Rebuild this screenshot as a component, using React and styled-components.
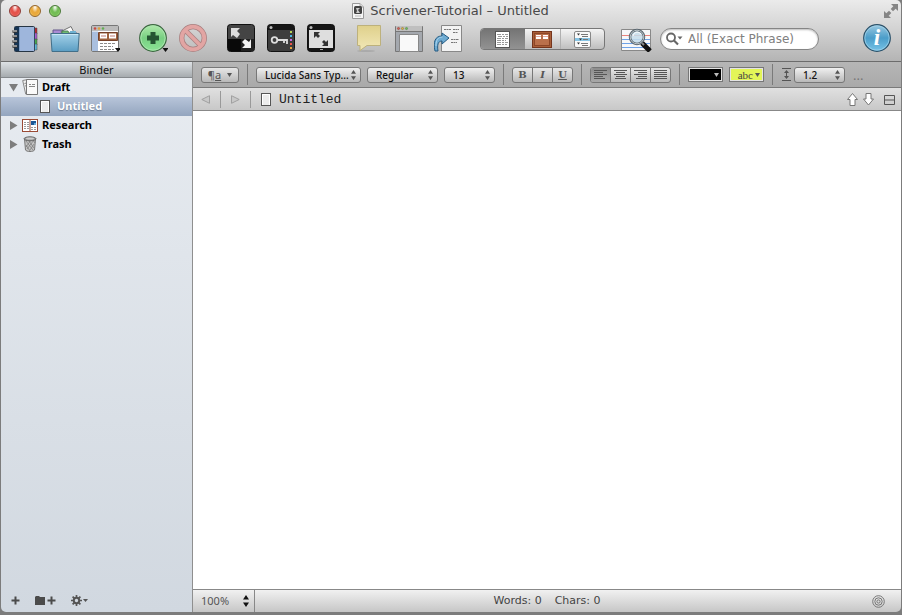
import React from 'react'
import styled, {createGlobalStyle} from "styled-components"

const GlobalStyle = createGlobalStyle`
    * {
        box-sizing: border-box;
    }
    body {
        margin: 0;
        background: #7c7c7c;
        font-family: "Noto Sans", "Open Sans", sans-serif;
        color: #333;
    }
    button, select, input, textarea {
        font: inherit;
        color: inherit;
        margin: 0;
        padding: 0;
        border: none;
        background: none;
        outline: none;
    }
    svg {
        display: block;
        flex: none;
    }
`

const Window = styled.div`
    min-height: 100vh;
    display: flex;
    flex-direction: column;
    border: solid #7c7c7c;
    border-width: 0 1px 3px;
`

const Header = styled.header`
    height: 62px;
    padding: 0 9px 0 8px;
    background: linear-gradient(#ebebeb, #d4d4d4 45%, #b4b4b4);
    border-bottom: 1px solid #6c6c6c;
    border-radius: 5px 5px 0 0;
`

const TitleBar = styled.div`
    height: 22px;
    display: grid;
    grid-template-columns: 1fr auto 1fr;
    align-items: center;
`

const Lights = styled.div`
    display: flex;
    gap: 8px;
`

const Light = styled.button`
    width: 12px;
    height: 12px;
    border-radius: 50%;
    border: 1px solid ${props => props.$edge};
    background: radial-gradient(ellipse at 50% 12%, #fff 0, ${props => props.$color} 42%, ${props => props.$color} 60%, ${props => props.$glow} 100%);
`

const Title = styled.h1`
    display: flex;
    align-items: center;
    gap: 6px;
    margin: 0;
    font-family: "DejaVu Sans", sans-serif;
    font-size: 13px;
    line-height: 22px;
    font-weight: 400;
    color: #484848;
`

const ExpandButton = styled.button`
    justify-self: end;
    margin-right: -6px;
`

const ToolBar = styled.div`
    height: 34px;
    display: flex;
    align-items: center;
    padding-left: 1px;
`

const ToolGroup = styled.div`
    display: flex;
    gap: 10px;
    margin-right: ${props => props.$gap || 18}px;
`

const ToolButton = styled.button`
    width: 30px;
    height: 30px;
`

const Segments = styled.div`
    display: flex;
    width: 125px;
    height: 22px;
    margin-right: 16px;
    border: 1px solid #777;
    border-radius: 4px;
    overflow: hidden;
    background: linear-gradient(#f4f4f4, #bebebe);
`

const Segment = styled.button`
    flex: ${props => props.$grow} 1 0;
    display: flex;
    align-items: center;
    justify-content: center;
    background: ${props => props.$on ? "linear-gradient(#747474, #929292)" : "none"};
    & + & + & {
        border-left: 1px solid #b0b0b0;
    }
`

const SearchField = styled.label`
    display: flex;
    align-items: center;
    gap: 5px;
    width: 159px;
    height: 22px;
    margin: 0 auto 0 8px;
    padding: 0 6px 0 5px;
    border: 1px solid #858585;
    border-radius: 11px;
    background: #fff;
    box-shadow: inset 0 1px 2px #bbb;
    input {
        min-width: 0;
        flex: 1;
        font-family: "DejaVu Sans", sans-serif;
        font-size: 12px;
        line-height: 18px;
    }
    input::placeholder {
        color: #808080;
        opacity: 1;
    }
`

const Body = styled.div`
    flex: 1;
    display: flex;
`

const Sidebar = styled.aside`
    width: 192px;
    display: flex;
    flex-direction: column;
    border-right: 1px solid #8f8f8f;
    background: linear-gradient(#e8ecf1, #d1d8e0);
    border-radius: 0 0 0 5px;
`

const SidebarTitle = styled.h2`
    height: 16px;
    margin: 0;
    border-bottom: 1px solid #85898d;
    background: linear-gradient(#dde1e4, #a6abaf);
    font-size: 11px;
    line-height: 16px;
    font-weight: 400;
    text-align: center;
    color: #111;
`

const Tree = styled.ul`
    flex: 1;
    margin: 0;
    padding: 0;
    list-style: none;
`

const TreeRow = styled.button`
    width: 100%;
    height: 19px;
    display: flex;
    align-items: center;
    gap: ${props => props.$level ? 7 : 4}px;
    padding: 0 0 1px ${props => props.$level ? 39 : 8}px;
    font-size: 11px;
    line-height: 18px;
    font-weight: 700;
    color: ${props => props.$selected ? "#fff" : "#000"};
    background: ${props => props.$selected ? "linear-gradient(#b8c5da, #93a5be)" : "none"};
    text-shadow: ${props => props.$selected ? "0 1px 1px #66778f" : "none"};
`

const SidebarTools = styled.div`
    height: 23px;
    display: flex;
    align-items: center;
    gap: 15px;
    padding: 0 10px;
`

const Main = styled.main`
    flex: 1;
    min-width: 0;
    display: flex;
    flex-direction: column;
`

const FormatBar = styled.div`
    height: 26px;
    display: flex;
    align-items: center;
    gap: 8px;
    padding: 0 8px;
    border-bottom: 1px solid #7a7a7a;
    background: linear-gradient(#b6b6b6, #a9a9a9);
    overflow: hidden;
`

const FormatGroup = styled.div`
    display: flex;
    align-items: center;
    gap: ${props => props.$gap || 6}px;
`

const Divider = styled.span`
    width: 1px;
    height: ${props => props.$height || 21}px;
    background: ${props => props.$color || "#7a7a7a"};
`

const SmallButton = styled.button`
    width: ${props => props.$width}px;
    height: 16px;
    display: flex;
    align-items: center;
    justify-content: center;
    gap: 6px;
    border: 1px solid #777;
    border-radius: 3px;
    background: linear-gradient(#e6e6e6, #b9b9b9);
    font-size: 11px;
    line-height: 14px;
    color: #555;
`

const Popup = styled.label`
    width: ${props => props.$width}px;
    height: 16px;
    display: flex;
    align-items: center;
    padding: 0 4px 0 8px;
    border: 1px solid #777;
    border-radius: 3px;
    background: linear-gradient(#f0f0f0, #b9b9b9);
    select {
        flex: 1;
        min-width: 0;
        appearance: none;
        font-size: 10px;
        line-height: 14px;
        font-weight: 500;
        color: #111;
    }
`

const ButtonStrip = styled.div`
    display: flex;
    height: 16px;
    border: 1px solid #777;
    border-radius: 3px;
    overflow: hidden;
    background: linear-gradient(#e8e8e8, #b9b9b9);
`

const StripButton = styled.button`
    width: ${props => props.$last ? 19 : 20}px;
    display: flex;
    align-items: center;
    justify-content: center;
    border-right: ${props => props.$last ? "none" : "1px solid #777"};
    background: ${props => props.$on ? "linear-gradient(#8d8d8d, #a8a8a8)" : "none"};
    font-family: "DejaVu Serif", serif;
    font-size: 10px;
    line-height: 14px;
    font-weight: 700;
    color: #555;
`

const Swatch = styled.button`
    width: 35px;
    height: 15px;
    display: flex;
    align-items: center;
    justify-content: flex-end;
    gap: 2px;
    padding: 0 3px;
    border: 1px solid #777;
    box-shadow: inset 0 0 0 1px #e4e4e4;
    background: ${props => props.$color};
    font-family: "Liberation Serif", serif;
    font-size: 11px;
    line-height: 12px;
    color: #444;
`

const Dots = styled.button`
    height: 16px;
    font-size: 13px;
    line-height: 16px;
    color: #777;
`

const DocumentBar = styled.div`
    height: 23px;
    display: flex;
    align-items: center;
    gap: 8px;
    padding: 0 6px 0 8px;
    border-bottom: 1px solid #888;
    background: linear-gradient(#e0e0e0, #c8c8c8);
`

const DocumentTitle = styled.h2`
    flex: 1;
    margin: 0;
    padding-top: 1px;
    font-family: "Liberation Mono", monospace;
    font-size: 13px;
    line-height: 21px;
    font-weight: 400;
    color: #222;
`

const DocumentTools = styled.div`
    display: flex;
    align-items: center;
    gap: 5px;
`

const SplitButton = styled.button`
    padding-left: 5px;
`

const Editor = styled.textarea`
    flex: 1;
    width: 100%;
    padding: 8px;
    background: #fff;
    resize: none;
    display: block;
    font-size: 13px;
`

const StatusBar = styled.footer`
    height: 23px;
    display: grid;
    grid-template-columns: 1fr auto 1fr;
    align-items: center;
    border-top: 1px solid #888;
    border-radius: 0 0 5px 0;
    background: linear-gradient(#f1f1f1, #c6c6c6);
    color: #444;
`

const Zoom = styled.label`
    width: 62px;
    height: 22px;
    display: flex;
    align-items: center;
    padding: 0 5px 0 8px;
    border-right: 1px solid #888;
    select {
        flex: 1;
        min-width: 0;
        appearance: none;
        font-size: 11px;
        line-height: 16px;
        color: #555;
    }
`

const Counts = styled.div`
    display: flex;
    gap: 13px;
    font-family: "DejaVu Sans", sans-serif;
    font-size: 11px;
    line-height: 16px;
`

const TargetButton = styled.button`
    justify-self: end;
    margin-right: 16px;
`

const Caret = ({fill = "#555"}) => (
    <svg width="5" height="4" viewBox="0 0 5 4"><path d="M0 0h5L2.5 4z" fill={fill} /></svg>
)

const UpDown = ({big}) => (
    <svg width={big ? 6 : 5} height={big ? 12 : 10} viewBox="0 0 5 10">
        <path d="M0 3.7L2.5 0 5 3.7zM0 6.3h5L2.5 10z" fill={big ? "#111" : "#555"} />
    </svg>
)

const DocIcon = () => (
    <svg width="10" height="13" viewBox="0 0 10 13">
        <rect x=".5" y=".5" width="9" height="12" fill="#ececec" stroke="#555" />
        <path d="M1.5 12V1.5h7V12" fill="none" stroke="#fff" />
    </svg>
)

const AppIcon = () => (
    <svg width="12" height="16" viewBox="0 0 12 16">
        <path d="M.5.5H8L11.500 4v11.500H.5z" fill="#f5f5f5" stroke="#999" />
        <path d="M8 .5V4h3.500" fill="#ddd" stroke="#aaa" />
        <rect x="2" y="3" width="8" height="8" rx="1.500" fill="#444" />
        <path d="M4 5h4L6 7l2 3H4l1-2z" fill="#ccc" />
        <path d="M3 13h6" stroke="#bbb" />
    </svg>
)

const ExpandIcon = () => (
    <svg width="14" height="14" viewBox="0 0 14 14">
        <path d="M7 0h7v7l-2.300-2.300-2.700 2.600L6.700 5l2.600-2.700zM0 7l2.300 2.300L5 6.700 7.300 9l-2.600 2.700L7 14H0z" fill="#858585" />
    </svg>
)

const NotebookIcon = () => (
    <svg width="30" height="30" viewBox="0 0 30 30">
        <path d="M23 4h4v6h-4z" fill="#b62a31" stroke="#444" strokeWidth=".5" />
        <path d="M23 9h4v7h-4z" fill="#a75bd0" stroke="#444" strokeWidth=".5" />
        <path d="M23 15h4v6h-4z" fill="#47a94d" stroke="#444" strokeWidth=".5" />
        <path d="M23 20h4v6h-4z" fill="#5db5d8" stroke="#444" strokeWidth=".5" />
        <rect x="4.500" y="2.500" width="20" height="25" rx="1" fill="#9eb6dc" stroke="#263544" />
        <path d="M5 3h4v24H5z" fill="#153454" />
        <path d="M9.500 3v24" stroke="#7e9cc4" />
        <path d="M24.500 3v24" stroke="#33465f" />
        <path d="M2.500 7.500h5m-5 5h5m-5 5h5m-5 5h5" stroke="#333" strokeWidth="2.500" />
        <path d="M3 7h4m-4 5h4m-4 5h4m-4 5h4" stroke="#eee" />
    </svg>
)

const FoldersIcon = () => (
    <svg width="30" height="30" viewBox="0 0 30 30">
        <defs><linearGradient id="folder" x2="0" y2="1"><stop stopColor="#a5d2e9" /><stop offset="1" stopColor="#5a9dc3" /></linearGradient></defs>
        <path d="M3 9V6h10l1 3h13v5H3z" fill="#a98bd4" stroke="#65598b" />
        <path d="M11 7.500l10-5 4 8H12z" fill="#f9f9f9" stroke="#555" strokeWidth=".8" />
        <path d="M12 10V7h6l1 2h7v3H12z" fill="#71bb76" stroke="#44734b" strokeWidth=".8" />
        <path d="M20 10V7h6v4h-6z" fill="#6fb2d2" />
        <path d="M.8 9.500h28.400L28 27.500H2z" fill="url(#folder)" stroke="#426f89" />
        <path d="M2 10.500h26" stroke="#c9e7f5" />
    </svg>
)

const LayoutIcon = () => (
    <svg width="30" height="30" viewBox="0 0 30 30">
        <rect x="1.500" y="1.500" width="27" height="26" rx="1.500" fill="#fff" stroke="#777" />
        <path d="M2 2h26v5H2z" fill="#bbb" />
        <circle cx="5" cy="4.500" r="1.300" fill="#c84a43" /><circle cx="9" cy="4.500" r="1.300" fill="#dca13e" /><circle cx="13" cy="4.500" r="1.300" fill="#62ae53" />
        <path d="M2 7.500h6V27H2z" fill="#a9bfdf" />
        <path d="M8.500 8.500h19v8h-19z" fill="#9e613e" stroke="#754129" />
        <path d="M10 9.500h7v5h-7zm9 0h7v5h-7z" fill="#fff" />
        <path d="M11 12h5m4 0h5" stroke="#c27d75" />
        <path d="M10 19.500h16m-16 3h13m-13 3h14" stroke="#8b8b8b" strokeDasharray="3 1" />
        <path d="M25 24h6l-3 4z" fill="#111" />
    </svg>
)

const AddIcon = () => (
    <svg width="30" height="30" viewBox="0 0 30 30">
        <defs><linearGradient id="add" x2="0" y2="1"><stop stopColor="#b2eaac" /><stop offset=".5" stopColor="#78cf82" /><stop offset="1" stopColor="#8be495" /></linearGradient></defs>
        <circle cx="15" cy="14" r="13.300" fill="url(#add)" stroke="#3c6640" strokeWidth="1.200" />
        <circle cx="15" cy="14" r="12.200" fill="none" stroke="#a9e5ad" />
        <path d="M12.500 8h5v3.500H21v5h-3.500V20h-5v-3.500H9v-5h3.500z" fill="#255532" />
        <path d="M24.500 24h6l-3 4z" fill="#111" />
    </svg>
)

const ForbidIcon = () => (
    <svg width="30" height="30" viewBox="0 0 30 30">
        <g fill="none" stroke="#a98080">
            <circle cx="15" cy="14" r="11.300" strokeWidth="5.300" />
            <path d="M7 6l16 16" strokeWidth="5" />
            <circle cx="15" cy="14" r="11.300" stroke="#e2a5a3" strokeWidth="3.800" />
            <path d="M7 6l16 16" stroke="#e2a5a3" strokeWidth="3.500" />
        </g>
    </svg>
)

const ComposeIcon = () => (
    <svg width="30" height="30" viewBox="0 0 30 30">
        <rect x="1.500" y=".5" width="27" height="27" rx="3" fill="#444" stroke="#111" />
        <path d="M2 15h13v12H4c-1 0-2-1-2-2z" fill="#090909" />
        <path d="M15 15h13v10c0 1-1 2-2 2H15z" fill="#202020" />
        <path d="M5 4h9l-3 3 3 3-3 4-4-3-2 2z" fill="#ddd" />
        <path d="M25 24h-9l3-3-3-3 3-3 4 3 2-3z" fill="#f2f2f2" />
    </svg>
)

const KeywordsIcon = () => (
    <svg width="30" height="30" viewBox="0 0 30 30">
        <rect x="1.500" y=".5" width="27" height="27" rx="3" fill="#3d3d3d" stroke="#111" />
        <path d="M2 3a2 2 0 012-2h22a2 2 0 012 2v3H2z" fill="#161616" />
        <circle cx="5" cy="3.500" r="1.500" fill="#bbb" />
        <circle cx="8.500" cy="16" r="2.800" fill="none" stroke="#ddd" strokeWidth="1.800" />
        <path d="M11 16h10v4m-3-4v3" fill="none" stroke="#ddd" strokeWidth="1.800" />
        <path d="M24 7h2v2h-2z" fill="#b6d455" />
        <path d="M24 11h2v2h-2z" fill="#48b9e2" />
        <path d="M24 15h2v2h-2z" fill="#c96de1" />
        <path d="M24 19h2v2h-2z" fill="#ed554b" />
        <path d="M24 23h2v2h-2z" fill="#e9a33d" />
    </svg>
)

const FullScreenIcon = () => (
    <svg width="30" height="30" viewBox="0 0 30 30">
        <rect x="1.500" y=".5" width="27" height="27" rx="3" fill="#161616" stroke="#111" />
        <circle cx="5" cy="3.500" r="1.500" fill="#bbb" />
        <path d="M3 6h24v18H3z" fill="#dedede" />
        <path d="M8 8h6l-2 2 2 2-2 2-2-2-2 2zM22 22h-6l2-2-2-2 2-2 2 2 2-2z" fill="#333" />
        <path d="M14 25.500h3" stroke="#aaa" />
    </svg>
)

const NoteIcon = () => (
    <svg width="30" height="30" viewBox="0 0 30 30">
        <defs><linearGradient id="note" x2="0" y2="1"><stop stopColor="#dfd08b" /><stop offset="1" stopColor="#f2e8b8" /></linearGradient></defs>
        <ellipse cx="12" cy="27" rx="9" ry="1" fill="#aaa" />
        <path d="M3.500 1.500h23v20H13l-7 5v-5H3.500z" fill="url(#note)" stroke="#bdb17c" />
    </svg>
)

const PanelIcon = () => (
    <svg width="30" height="30" viewBox="0 0 30 30">
        <path d="M1.500 27.500v-25h27v25z" fill="#a4a8ae" stroke="#777" />
        <path d="M2 2h26v5H2z" fill="#bfbfbf" />
        <path d="M2 7.500h26" stroke="#777" />
        <circle cx="4.500" cy="4.500" r="1.100" fill="#d65d54" stroke="#914138" strokeWidth=".6" /><circle cx="8.500" cy="4.500" r="1.100" fill="#e1b142" stroke="#917838" strokeWidth=".6" /><circle cx="12.500" cy="4.500" r="1.100" fill="#69bf59" stroke="#508547" strokeWidth=".6" />
        <path d="M5.500 10.500h19v17h-19z" fill="#f9f9f9" stroke="#888" />
    </svg>
)

const ReferenceIcon = () => (
    <svg width="30" height="30" viewBox="0 0 30 30">
        <path d="M7.500 1.500h20v26h-20z" fill="#f3f3f3" stroke="#888" />
        <path d="M10 5.500h7m2 0h6m-6 3h5m-14 5h3m4 2h8m-8 3h6" stroke="#777" strokeDasharray="2 .5" />
        <path d="M1 27c-2-9 0-15 7-15V9l7 5-7 6v-3c-4 0-5 4-4 10z" fill="#6eabd2" stroke="#245b83" />
        <path d="M2 22c0-6 2-9 6.500-9" fill="none" stroke="#acd4ed" />
    </svg>
)

const TextViewIcon = () => (
    <svg width="15" height="17" viewBox="0 0 15 17">
        <rect x=".5" y=".5" width="14" height="16" fill="#fff" stroke="#555" />
        <path d="M2 3.500h11M3 5.500h10M2 7.500h11M2 9.500h9M2 11.500h11M2 13.500h10" stroke="#999" strokeDasharray="4 1 2 1" />
    </svg>
)

const CorkboardIcon = () => (
    <svg width="20" height="17" viewBox="0 0 20 17">
        <rect x=".5" y=".5" width="19" height="16" fill="#a95e38" stroke="#75351d" />
        <rect x="2.500" y="2.500" width="15" height="12" fill="#ba704b" stroke="#8c4628" />
        <path d="M4 4h5v4H4zm7 0h5v4h-5z" fill="#fff" />
        <path d="M4 5.500h5m2 0h5" stroke="#e3a9a1" />
    </svg>
)

const OutlineIcon = () => (
    <svg width="17" height="17" viewBox="0 0 17 17">
        <rect x=".5" y=".5" width="16" height="16" rx="1.500" fill="#f9f9f9" stroke="#888" />
        <path d="M1 7h15v3H1z" fill="#88c5e5" />
        <path d="M7 3.500h7M8 5.500h6M9 8.500h5M7 12.500h7M8 14.500h6" stroke="#777" />
        <path d="M3 2.500h3L4.500 4.500zm2 5h3L6.500 9.500zM3 11.500h3L4.500 13.500z" fill="#333" />
    </svg>
)

const IndexSearchIcon = () => (
    <svg width="31" height="26" viewBox="0 0 31 26">
        <path d="M.5 3.500h29v21H.5z" fill="#f7f8fa" stroke="#888" />
        <path d="M1 9.500h28" stroke="#e9847d" />
        <path d="M1 13.500h28M1 17.500h28M1 21.500h28" stroke="#6fa3e8" />
        <path d="M21 17l8 8" stroke="#111" strokeWidth="5" />
        <path d="M20 16l3 3" stroke="#888" strokeWidth="2" />
        <circle cx="16" cy="11" r="7" fill="#c6ddeb" fillOpacity=".85" stroke="#59656e" strokeWidth="2.500" />
        <circle cx="16" cy="11" r="6.800" fill="none" stroke="#bcc6cb" strokeWidth="1" />
        <path d="M12 10c1-4 5-5 8-2" fill="none" stroke="#fff" />
    </svg>
)

const MagnifierIcon = () => (
    <svg width="17" height="14" viewBox="0 0 17 14">
        <circle cx="5" cy="5.500" r="4" fill="none" stroke="#666" strokeWidth="1.800" />
        <path d="M8 8.500l4 4" stroke="#666" strokeWidth="2.200" />
        <path d="M11.500 4.500h5L14 7.500z" fill="#666" />
    </svg>
)

const InfoIcon = () => (
    <svg width="30" height="30" viewBox="0 0 30 30">
        <defs><linearGradient id="info" x2="0" y2="1"><stop stopColor="#9bc9e1" /><stop offset=".5" stopColor="#4b9dc9" /><stop offset="1" stopColor="#77c4e8" /></linearGradient></defs>
        <circle cx="15" cy="14" r="13.300" fill="url(#info)" stroke="#2b5068" strokeWidth="1.200" />
        <circle cx="15" cy="14" r="12.200" fill="none" stroke="#a7d4e9" strokeOpacity=".7" />
        <text x="15" y="21" textAnchor="middle" fontFamily="Liberation Serif, serif" fontSize="23" fontWeight="700" fontStyle="italic" fill="#fff">i</text>
    </svg>
)

const Disclosure = ({open}) => (
    <svg width="9" height="9" viewBox="0 0 9 9">
        <path d={open ? "M0 1h9L4.500 8.500z" : "M1 0l7.500 4.500L1 9z"} fill="#7d7d7d" />
    </svg>
)

const DraftIcon = () => (
    <svg width="16" height="16" viewBox="0 0 16 16">
        <path d="M.7 1.500l5-1 3 13-5 1.500z" fill="#eee" stroke="#888" />
        <path d="M2.500 4.500l2-.5m-1.500 3l2-.5" stroke="#888" />
        <path d="M4.500.5h11v15h-11z" fill="#fafafa" stroke="#777" />
        <path d="M7 5.500h2m1 0h3M7 7.500h6" stroke="#888" />
    </svg>
)

const ResearchIcon = () => (
    <svg width="16" height="13" viewBox="0 0 16 13">
        <rect x=".5" y=".5" width="15" height="12" fill="#fff" stroke="#9a4a35" />
        <path d="M8 1v11" stroke="#9a4a35" />
        <path d="M2 3.500h2m1 0h2m-5 2h2m1 0h2m-5 2h2m1 0h2m-5 2h2m1 0h2m2-1h2m1 0h2m-5 2h2m1 0h2" stroke="#999" />
        <path d="M9 2h5v4H9z" fill="#1c5795" />
        <path d="M12 4h2v2h-2z" fill="#65a9d8" />
    </svg>
)

const TrashIcon = () => (
    <svg width="16" height="16" viewBox="0 0 16 16">
        <path d="M2.500 3l1 11c1 2 8 2 9 0l1-11z" fill="#c4c4c4" stroke="#777" />
        <path d="M4 5l7 9m-7-5l4 6m-1-10l5 7m-1-8l2 3m-1-3l-7 9m7-5l-4 6m1-10l-5 7" stroke="#777" strokeWidth=".7" />
        <ellipse cx="8" cy="2.800" rx="6" ry="2" fill="#999" stroke="#666" />
        <ellipse cx="8" cy="2.500" rx="4" ry="1" fill="#ccc" />
    </svg>
)

const PlusIcon = () => (
    <svg width="9" height="9" viewBox="0 0 9 9"><path d="M4.500 .5v8M.5 4.500h8" stroke="#4b4b4b" strokeWidth="2" /></svg>
)

const FolderPlusIcon = () => (
    <svg width="21" height="9" viewBox="0 0 21 9">
        <path d="M0 1l1-1h3l1 1h5v8H0z" fill="#4b4b4b" />
        <path d="M16.500 .5v8M12.500 4.500h8" stroke="#4b4b4b" strokeWidth="2" />
    </svg>
)

const GearIcon = () => (
    <svg width="17" height="11" viewBox="0 0 17 11">
        <circle cx="5.500" cy="5.500" r="2.700" fill="none" stroke="#555" strokeWidth="2" />
        <path d="M5.500 0v2.500m0 6V11M0 5.500h2.500m6 0H11M1.600 1.600l1.800 1.800m4.200 4.200l1.800 1.800m0-7.800L7.600 3.400M3.400 7.600L1.600 9.400" stroke="#555" strokeWidth="1.700" />
        <path d="M12 4h5l-2.500 3z" fill="#555" />
    </svg>
)

const HistoryIcon = ({back}) => (
    <svg width="9" height="9" viewBox="0 0 9 9">
        <path d={back ? "M8.500 .7v7.600L.8 4.500z" : "M.5 .7v7.600l7.700-3.800z"} fill="#c8c8c8" stroke="#a0a0a0" />
    </svg>
)

const ArrowIcon = ({down}) => (
    <svg width="11" height="13" viewBox="0 0 11 13">
        <path d={down ? "M3 .5h5V6h2.500l-5 6-5-6H3z" : "M3 12.500h5V6.500h2.500l-5-6-5 6H3z"} fill="#fff" stroke="#777" />
    </svg>
)

const SplitIcon = () => (
    <svg width="11" height="11" viewBox="0 0 11 11"><path d="M.5 1.500h10v9H.5zm0 4.500h10" fill="none" stroke="#555" /></svg>
)

const SpacingIcon = () => (
    <svg width="11" height="13" viewBox="0 0 11 13">
        <path d="M1 .5h9M1 12.500h9M5.500 3v7" stroke="#555" />
        <path d="M3 5l2.500-3L8 5zm0 3h5l-2.500 3z" fill="#555" />
    </svg>
)

const TargetIcon = () => (
    <svg width="13" height="13" viewBox="0 0 13 13">
        <g fill="none" stroke="#777"><circle cx="6.500" cy="6.500" r="5.800" /><circle cx="6.500" cy="6.500" r="3.700" /><circle cx="6.500" cy="6.500" r="1.600" /></g>
    </svg>
)

const alignLines = {
    left: "M0 .5h13M0 2.500h9M0 4.500h13M0 6.500h9M0 8.500h11",
    center: "M0 .5h13M2 2.500h9M0 4.500h13M2 6.500h9M1 8.500h11",
    right: "M0 .5h13M4 2.500h9M0 4.500h13M4 6.500h9M2 8.500h11",
    justify: "M0 .5h13M0 2.500h13M0 4.500h13M0 6.500h13M0 8.500h13",
}

const toolGroups = [
    {tools: [["Binder", NotebookIcon], ["Collections", FoldersIcon], ["Layouts", LayoutIcon]]},
    {tools: [["Add", AddIcon], ["Move to Trash", ForbidIcon]]},
    {tools: [["Compose", ComposeIcon], ["Keywords", KeywordsIcon], ["Full Screen", FullScreenIcon]]},
    {gap: 16, tools: [["Comment", NoteIcon], ["Panel", PanelIcon], ["Quick Reference", ReferenceIcon]]},
]

const PopupMenu = ({label, value, width}) => (
    <Popup $width={width}>
        <select aria-label={label} defaultValue={value}>
            <option>{value}</option>
        </select>
        <UpDown />
    </Popup>
)

const AppHeader = () => (
    <Header>
        <TitleBar>
            <Lights>
                <Light aria-label="Close" $color="#e5544c" $glow="#ff9c8f" $edge="#8e3a35" />
                <Light aria-label="Minimize" $color="#e9a93d" $glow="#ffe07a" $edge="#94652a" />
                <Light aria-label="Zoom" $color="#73bd56" $glow="#bdf28a" $edge="#4a7a38" />
            </Lights>
            <Title><AppIcon />Scrivener-Tutorial – Untitled</Title>
            <ExpandButton aria-label="Enter full screen"><ExpandIcon /></ExpandButton>
        </TitleBar>
        <ToolBar>
            {toolGroups.map(({gap, tools}, index) => (
                <ToolGroup key={index} $gap={gap}>
                    {tools.map(([label, Icon]) => (
                        <ToolButton key={label} aria-label={label}><Icon /></ToolButton>
                    ))}
                </ToolGroup>
            ))}
            <Segments>
                <Segment aria-label="Document" aria-pressed="true" $on $grow={44}><TextViewIcon /></Segment>
                <Segment aria-label="Corkboard" $grow={36}><CorkboardIcon /></Segment>
                <Segment aria-label="Outline" $grow={43}><OutlineIcon /></Segment>
            </Segments>
            <button aria-label="Project search"><IndexSearchIcon /></button>
            <SearchField>
                <MagnifierIcon />
                <input type="text" aria-label="Search" placeholder="All (Exact Phrase)" />
            </SearchField>
            <ToolButton aria-label="Inspector"><InfoIcon /></ToolButton>
        </ToolBar>
    </Header>
)

const Binder = () => (
    <Sidebar>
        <SidebarTitle>Binder</SidebarTitle>
        <Tree>
            <li>
                <TreeRow><Disclosure open /><DraftIcon />Draft</TreeRow>
                <Tree>
                    <li><TreeRow $level={1} $selected><DocIcon />Untitled</TreeRow></li>
                </Tree>
            </li>
            <li><TreeRow><Disclosure /><ResearchIcon />Research</TreeRow></li>
            <li><TreeRow><Disclosure /><TrashIcon />Trash</TreeRow></li>
        </Tree>
        <SidebarTools>
            <button aria-label="Add document"><PlusIcon /></button>
            <button aria-label="Add folder"><FolderPlusIcon /></button>
            <button aria-label="Actions"><GearIcon /></button>
        </SidebarTools>
    </Sidebar>
)

const Formatting = () => (
    <FormatBar>
        <SmallButton $width={38} aria-label="Styles"><span>¶<u>a</u></span><Caret /></SmallButton>
        <Divider />
        <FormatGroup>
            <PopupMenu label="Font" value="Lucida Sans Typ..." width={105} />
            <PopupMenu label="Typeface" value="Regular" width={71} />
            <PopupMenu label="Size" value="13" width={51} />
        </FormatGroup>
        <Divider />
        <ButtonStrip>
            <StripButton aria-label="Bold">B</StripButton>
            <StripButton aria-label="Italic"><i>I</i></StripButton>
            <StripButton aria-label="Underline" $last><u>U</u></StripButton>
        </ButtonStrip>
        <Divider />
        <ButtonStrip>
            {Object.keys(alignLines).map(name => (
                <StripButton key={name} aria-label={"Align " + name} $on={name === "left"} $last={name === "justify"}>
                    <svg width="13" height="9" viewBox="0 0 13 9"><path d={alignLines[name]} stroke="#555" /></svg>
                </StripButton>
            ))}
        </ButtonStrip>
        <Divider />
        <FormatGroup>
            <Swatch aria-label="Text color" $color="#000"><Caret fill="#bbb" /></Swatch>
            <Swatch aria-label="Highlight" $color="#e3f558">abc<Caret /></Swatch>
        </FormatGroup>
        <Divider />
        <FormatGroup $gap={2}>
            <SpacingIcon />
            <PopupMenu label="Line spacing" value="1.2" width={51} />
        </FormatGroup>
        <Dots aria-label="More">...</Dots>
    </FormatBar>
)

const App = () => (
    <>
        <GlobalStyle />
        <Window>
            <AppHeader />
            <Body>
                <Binder />
                <Main>
                    <Formatting />
                    <DocumentBar>
                        <FormatGroup $gap={10}>
                            <button aria-label="Back"><HistoryIcon back /></button>
                            <Divider $height={17} $color="#999" />
                            <button aria-label="Forward"><HistoryIcon /></button>
                            <Divider $height={17} $color="#999" />
                            <DocIcon />
                        </FormatGroup>
                        <DocumentTitle>Untitled</DocumentTitle>
                        <DocumentTools>
                            <button aria-label="Previous document"><ArrowIcon /></button>
                            <button aria-label="Next document"><ArrowIcon down /></button>
                            <SplitButton aria-label="Split"><SplitIcon /></SplitButton>
                        </DocumentTools>
                    </DocumentBar>
                    <Editor aria-label="Document text" />
                    <StatusBar>
                        <Zoom>
                            <select aria-label="Zoom" defaultValue="100%"><option>100%</option></select>
                            <UpDown big />
                        </Zoom>
                        <Counts><span>Words: 0</span><span>Chars: 0</span></Counts>
                        <TargetButton aria-label="Targets"><TargetIcon /></TargetButton>
                    </StatusBar>
                </Main>
            </Body>
        </Window>
    </>
)

export default App
